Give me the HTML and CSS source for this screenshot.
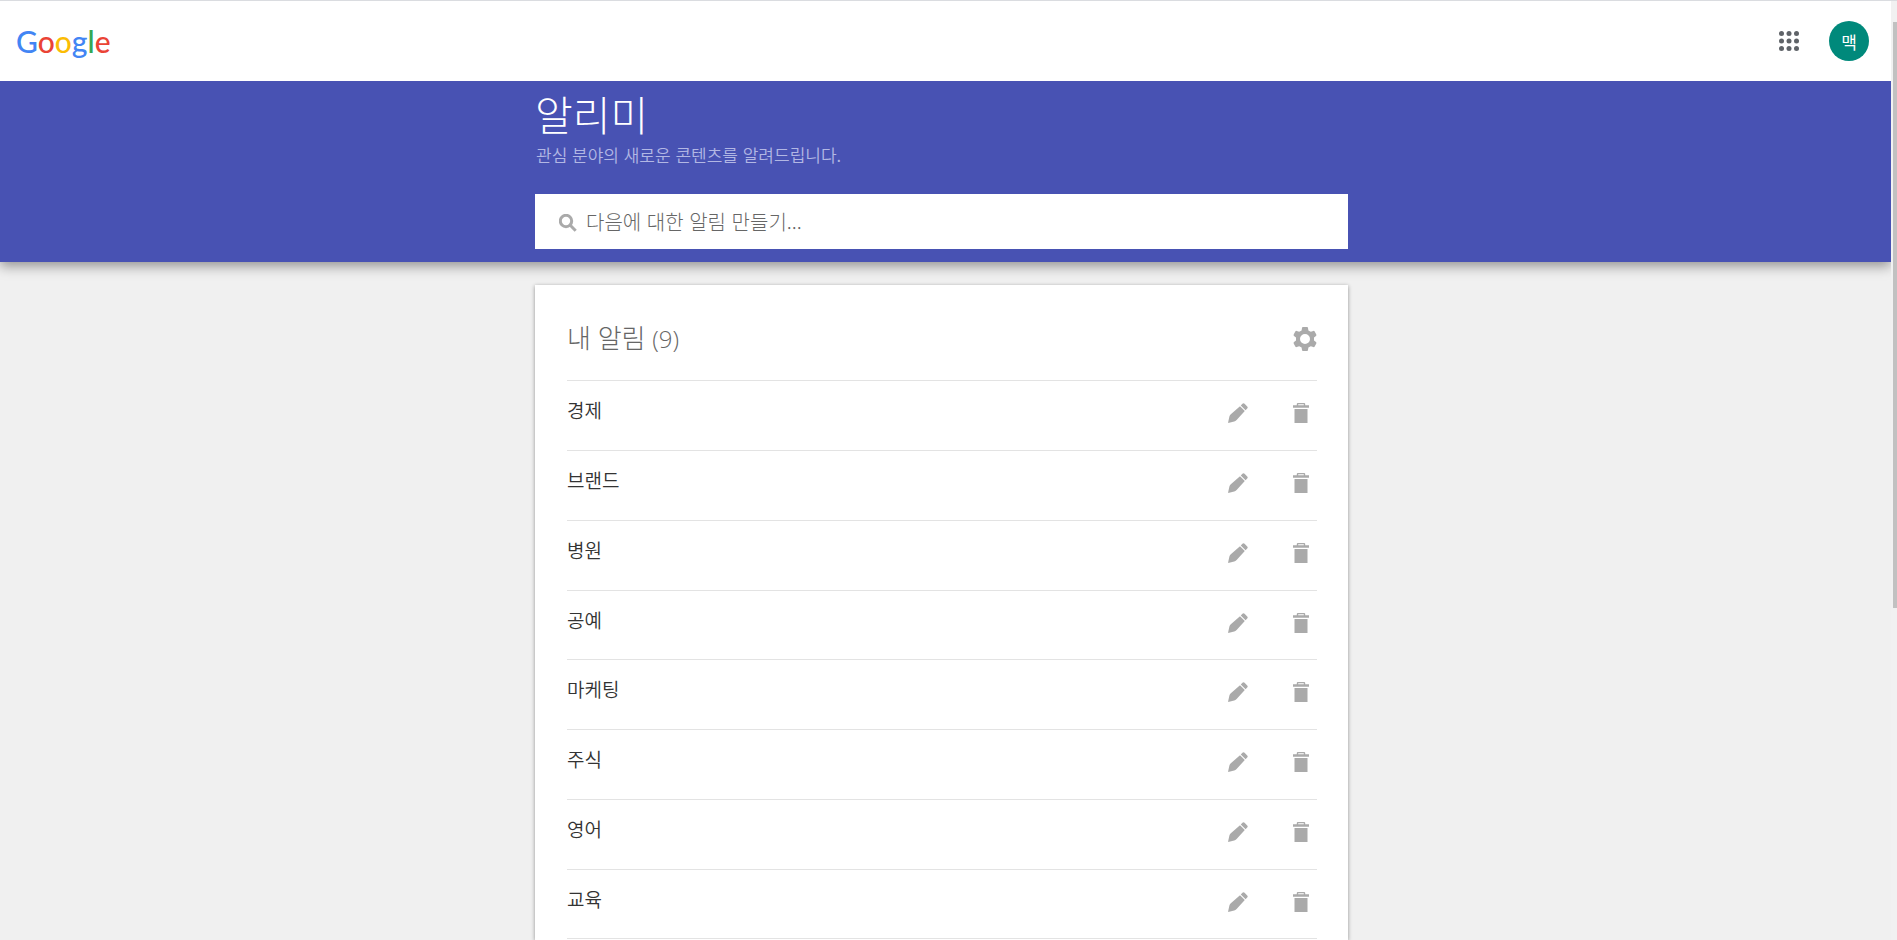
FILE: index.html
```
<!DOCTYPE html>
<html lang="ko">
<head>
  <meta charset="UTF-8">
  <meta name="viewport" content="width=device-width, initial-scale=1.0">
  <title>Google 알리미</title>
  <link rel="stylesheet" href="styles.css">
</head>
<body>
  <svg class="sprite" aria-hidden="true">
    <symbol id="pencil" viewBox="0 0 20 20">
      <path d="M0 20 1.4 13.4Q1.8 12.2 2.8 11.2L12 3.2 16.8 8 8.6 17Q7.4 18.2 6.2 18.6zM12.8 2.4 14.4.8Q15.4-.2 16.6.8L19.2 3.4Q20.2 4.6 19.2 5.6L17.6 7.2z"/>
    </symbol>
    <symbol id="trash" viewBox="0 0 16 20">
      <path d="M1.5 6H14.5V20H1.5zM0 2.2H3.8V1Q3.8 0 4.8 0H11.2Q12.2 0 12.2 1V2.2H16V4.8H0zM5.2 1.2V2.2H10.8V1.2z" fill-rule="evenodd"/>
    </symbol>
    <symbol id="gear" viewBox="0 0 24 24">
      <path d="M9 1Q9 0 10 0H14Q15 0 15 1L15.4 3.4 17.8 4.8 20.3 3.9Q21.2 3.6 21.7 4.5L23.3 7.5Q23.7 8.4 23 9L21 10.6V13.4L23 15Q23.7 15.6 23.3 16.5L21.7 19.5Q21.2 20.4 20.3 20.1L17.8 19.2 15.4 20.6 15 23Q15 24 14 24H10Q9 24 9 23L8.6 20.6 6.2 19.2 3.7 20.1Q2.8 20.4 2.3 19.5L.7 16.5Q.3 15.6 1 15L3 13.4V10.6L1 9Q.3 8.4.7 7.5L2.3 4.5Q2.8 3.6 3.7 3.9L6.2 4.8 8.6 3.4zM12 7a5 5 0 1 0 0 10 5 5 0 0 0 0-10z" fill-rule="evenodd"/>
    </symbol>
  </svg>

  <div class="page">
    <header class="topbar">
      <a class="logo" href="#" aria-label="Google"><span class="blue">G</span><span class="red">o</span><span class="yellow">o</span><span class="blue">g</span><span class="green">l</span><span class="red">e</span></a>
      <div class="account">
        <button class="apps" type="button" aria-label="Google 앱">
          <svg width="20" height="20" viewBox="0 0 20 20">
            <circle cx="2.5" cy="2.5" r="2.5"/><circle cx="10" cy="2.5" r="2.5"/><circle cx="17.5" cy="2.5" r="2.5"/>
            <circle cx="2.5" cy="10" r="2.5"/><circle cx="10" cy="10" r="2.5"/><circle cx="17.5" cy="10" r="2.5"/>
            <circle cx="2.5" cy="17.5" r="2.5"/><circle cx="10" cy="17.5" r="2.5"/><circle cx="17.5" cy="17.5" r="2.5"/>
          </svg>
        </button>
        <button class="avatar" type="button">맥</button>
      </div>
    </header>

    <section class="banner">
      <div class="content">
        <h1>알리미</h1>
        <p class="subtitle">관심 분야의 새로운 콘텐츠를 알려드립니다.</p>
        <label class="search">
          <svg width="18" height="18" viewBox="0 0 18 18">
            <circle cx="7" cy="7" r="5.7"/>
            <path d="M11 11 16.7 16.7"/>
          </svg>
          <input type="text" placeholder="다음에 대한 알림 만들기..." aria-label="다음에 대한 알림 만들기">
        </label>
      </div>
    </section>

    <main class="main">
      <div class="content card">
        <div class="card-head">
          <h2>내 알림 <span class="count">(9)</span></h2>
          <button type="button" aria-label="설정"><svg width="24" height="24"><use href="#gear"/></svg></button>
        </div>
        <ul class="alerts">
          <li>
            <a href="#">경제</a>
            <button type="button" aria-label="수정"><svg width="20" height="20"><use href="#pencil"/></svg></button>
            <button type="button" aria-label="삭제"><svg width="16" height="20"><use href="#trash"/></svg></button>
          </li>
          <li>
            <a href="#">브랜드</a>
            <button type="button" aria-label="수정"><svg width="20" height="20"><use href="#pencil"/></svg></button>
            <button type="button" aria-label="삭제"><svg width="16" height="20"><use href="#trash"/></svg></button>
          </li>
          <li>
            <a href="#">병원</a>
            <button type="button" aria-label="수정"><svg width="20" height="20"><use href="#pencil"/></svg></button>
            <button type="button" aria-label="삭제"><svg width="16" height="20"><use href="#trash"/></svg></button>
          </li>
          <li>
            <a href="#">공예</a>
            <button type="button" aria-label="수정"><svg width="20" height="20"><use href="#pencil"/></svg></button>
            <button type="button" aria-label="삭제"><svg width="16" height="20"><use href="#trash"/></svg></button>
          </li>
          <li>
            <a href="#">마케팅</a>
            <button type="button" aria-label="수정"><svg width="20" height="20"><use href="#pencil"/></svg></button>
            <button type="button" aria-label="삭제"><svg width="16" height="20"><use href="#trash"/></svg></button>
          </li>
          <li>
            <a href="#">주식</a>
            <button type="button" aria-label="수정"><svg width="20" height="20"><use href="#pencil"/></svg></button>
            <button type="button" aria-label="삭제"><svg width="16" height="20"><use href="#trash"/></svg></button>
          </li>
          <li>
            <a href="#">영어</a>
            <button type="button" aria-label="수정"><svg width="20" height="20"><use href="#pencil"/></svg></button>
            <button type="button" aria-label="삭제"><svg width="16" height="20"><use href="#trash"/></svg></button>
          </li>
          <li>
            <a href="#">교육</a>
            <button type="button" aria-label="수정"><svg width="20" height="20"><use href="#pencil"/></svg></button>
            <button type="button" aria-label="삭제"><svg width="16" height="20"><use href="#trash"/></svg></button>
          </li>
        </ul>
      </div>
    </main>
  </div>
  <div class="scrollbar"><div class="thumb"></div></div>
</body>
</html>
```
FILE: styles.css
```
* {
  box-sizing: border-box;
}

body {
  margin: 0;
  height: 100vh;
  overflow: hidden;
  display: flex;
  border-top: 1px solid #dadce0;
  background-color: #f0f0f0;
  font-family: "Open Sans", "Noto Sans CJK KR", sans-serif;
  font-weight: 300;
}

h1, h2, p, ul {
  margin: 0;
  padding: 0;
  font-weight: 300;
}

button {
  display: flex;
  align-items: center;
  justify-content: center;
  padding: 0;
  border: none;
  background: none;
  fill: #aaa;
  cursor: pointer;
}

.sprite {
  display: none;
}

.page {
  flex: 1;
  display: flex;
  flex-direction: column;
  overflow: hidden;
}

/* top bar */
.topbar {
  display: flex;
  align-items: center;
  justify-content: space-between;
  flex: none;
  position: relative;
  z-index: 1;
  height: 80px;
  padding: 0 22px 0 16px;
  background-color: #fff;
}

.logo {
  font-family: Lato, sans-serif;
  font-size: 30px;
  font-weight: 500;
  line-height: 40px;
  text-decoration: none;
}

.blue { color: #4285f4; }
.red { color: #ea4335; }
.yellow { color: #fbbc05; }
.green { color: #34a853; }

.account {
  display: flex;
  align-items: center;
  gap: 30px;
}

.apps {
  fill: #5f6368;
}

.avatar {
  width: 40px;
  height: 40px;
  border-radius: 50%;
  background-color: #00897b;
  color: #fff;
  font-family: inherit;
  font-size: 17px;
  font-weight: 400;
}

/* blue banner */
.banner {
  flex: none;
  padding: 9px 8px 13px 0;
  background-color: #4852b3;
  box-shadow: 0 4px 12px rgba(0, 0, 0, 0.4);
}

.content {
  width: 100%;
  max-width: 813px;
  margin: 0 auto;
}

h1 {
  color: #fff;
  font-size: 41px;
  line-height: 50px;
}

.subtitle {
  margin: 2px 0 26px 1px;
  color: #b2b7e4;
  font-family: "Noto Sans CJK KR", sans-serif;
  font-size: 17px;
  font-weight: 350;
  line-height: 26px;
}

.search {
  display: flex;
  align-items: center;
  gap: 9px;
  height: 55px;
  padding: 2px 24px 0;
  background-color: #fff;
}

.search svg {
  flex: none;
  fill: none;
  stroke: #aaa;
  stroke-width: 3;
}

.search input {
  flex: 1;
  padding: 0 0 3px;
  border: none;
  outline: none;
  font-family: "Noto Sans CJK KR", sans-serif;
  font-size: 20px;
  font-weight: 300;
}

.search input::placeholder {
  color: #666;
}

/* alert list */
.main {
  flex: 1;
  display: flex;
  padding: 23px 8px 0 0;
}

.card {
  padding: 0 31px 0 32px;
  background-color: #fff;
  box-shadow: 0 1px 4px rgba(0, 0, 0, 0.4);
}

.card-head {
  display: flex;
  align-items: center;
  justify-content: space-between;
  height: 96px;
  padding-top: 12px;
  border-bottom: 1px solid #e3e3e3;
}

h2 {
  color: #666;
  font-size: 26px;
  line-height: 36px;
}

.count {
  font-size: 24px;
}

.alerts {
  list-style: none;
}

.alerts li {
  display: flex;
  align-items: center;
  height: 70px;
  padding: 0 8px 5px 0;
  border-bottom: 1px solid #e3e3e3;
}

.alerts li:nth-child(4n) {
  height: 69px;
}

.alerts a {
  flex: 1;
  padding-bottom: 4px;
  color: #333;
  font-size: 19px;
  font-weight: 350;
  line-height: 28px;
  text-decoration: none;
}

.alerts button + button {
  margin-left: 45px;
}

.scrollbar {
  width: 6px;
  padding: 21px 0 0 2px;
  background-color: #f1f1f1;
}

.thumb {
  height: 586px;
  background-color: #c1c1c1;
}
```
